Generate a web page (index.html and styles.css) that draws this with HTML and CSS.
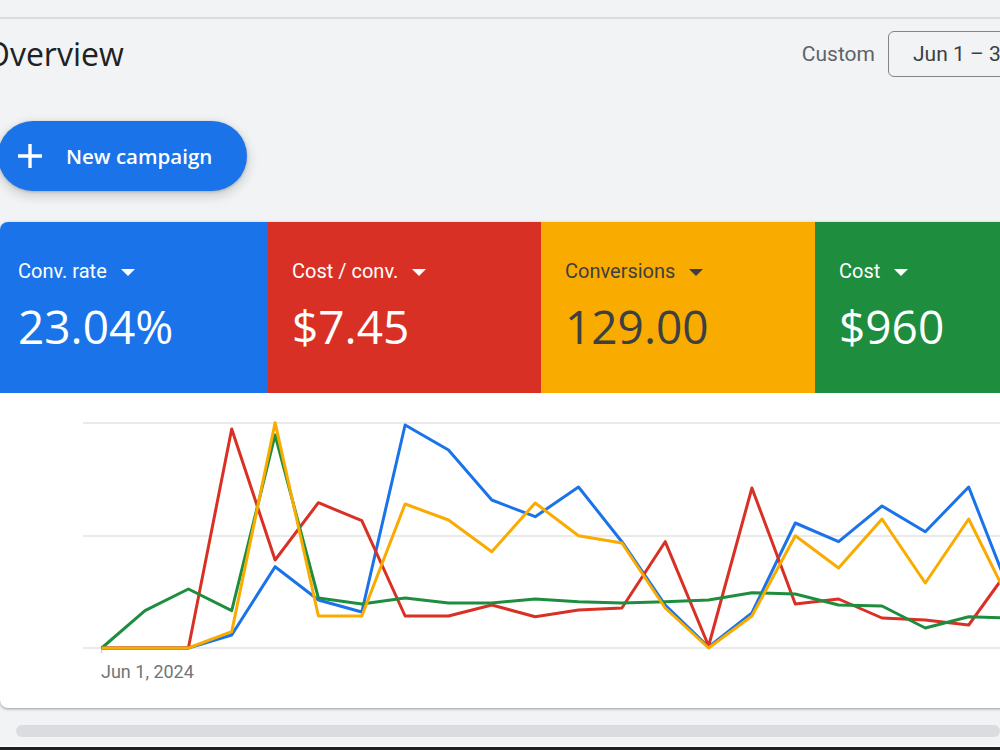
FILE: index.html
```html
<!DOCTYPE html>
<html>

<head>
    <title>Overview</title>
    <link rel="stylesheet" href="styles.css">
</head>

<body>
    <div class="topbar"></div>

    <main class="content">
        <header class="page-head">
            <h1>Overview</h1>
            <div class="range">
                <span class="range-label">Custom</span>
                <button class="range-box">Jun 1 – 30, 2024</button>
            </div>
        </header>

        <div class="actions">
            <button class="new-campaign">
                <svg class="plus" viewBox="0 0 24 24" width="24" height="24">
                    <path d="M12 0v24M0 12h24" />
                </svg>
                New campaign
            </button>
        </div>

        <section class="card">
            <div class="metrics">
                <div class="metric blue">
                    <div class="metric-label">Conv. rate <span class="caret"></span></div>
                    <div class="metric-value">23.04%</div>
                </div>
                <div class="metric red">
                    <div class="metric-label">Cost / conv. <span class="caret"></span></div>
                    <div class="metric-value">$7.45</div>
                </div>
                <div class="metric yellow">
                    <div class="metric-label">Conversions <span class="caret"></span></div>
                    <div class="metric-value">129.00</div>
                </div>
                <div class="metric green">
                    <div class="metric-label">Cost <span class="caret"></span></div>
                    <div class="metric-value">$960</div>
                </div>
            </div>

            <div class="chart">
                <svg width="1264" height="315" viewBox="0 0 1264 315">
                    <line class="grid" x1="83" y1="30" x2="1264" y2="30" />
                    <line class="grid" x1="83" y1="143" x2="1264" y2="143" />
                    <line class="grid" x1="83" y1="255" x2="1264" y2="255" />
                    <line class="tick" x1="101.7" y1="255" x2="101.7" y2="260" />

                    <polyline class="series s-blue" points="101.7,255 145,255 188.4,255 231.7,242 275.1,173.7 318.4,207 361.8,219 405.1,32 448.5,57 491.8,107 535.2,123.7 578.5,94 621.9,148.7 665.2,212 708.6,254 751.9,220 795.3,130 838.6,148.7 882,113 925.3,138.7 968.7,94 1012,205" />
                    <polyline class="series s-red" points="101.7,255 145,255 188.4,255 231.7,36 275.1,167 318.4,109.7 361.8,127.7 405.1,223 448.5,223 491.8,212 535.2,223.7 578.5,217 621.9,215 665.2,148.7 708.6,253 751.9,95 795.3,211 838.6,206 882,225 925.3,227 968.7,232 1012,172" />
                    <polyline class="series s-green" points="101.7,255 145,217.7 188.4,196 231.7,217.7 275.1,42 318.4,205 361.8,211 405.1,205 448.5,210 491.8,210 535.2,206 578.5,208.7 621.9,210 665.2,208.7 708.6,207 751.9,199.7 795.3,201 838.6,212 882,213 925.3,235 968.7,223.7 1012,225" />
                    <polyline class="series s-yellow" points="101.7,255 145,255 188.4,255 231.7,238.7 275.1,29.7 318.4,223 361.8,223 405.1,111 448.5,127 491.8,158.7 535.2,110 578.5,142.7 621.9,150 665.2,215 708.6,255 751.9,223 795.3,142.7 838.6,175 882,126 925.3,190 968.7,126 1012,213" />

                    <text class="axis-label" x="101" y="285">Jun 1, 2024</text>
                </svg>
            </div>
        </section>
    </main>

    <div class="hscroll">
        <div class="hscroll-thumb"></div>
    </div>
    <div class="taskbar"></div>
</body>

</html>
```

FILE: styles.css
```css
body {
    background: #f1f3f4;
    font-family: 'Roboto', 'Liberation Sans', sans-serif;
    margin: 0;
    padding: 0;
    overflow: hidden;
    height: 750px;
}

.topbar {
    height: 17px;
    border-bottom: 2px solid #dadce0;
}

/* page is scrolled a little to the right */
.content {
    width: 1300px;
    margin-left: -18px;
}

.page-head {
    display: flex;
    align-items: center;
    height: 70px;
    padding-right: 24px;
}

h1 {
    flex: 1;
    margin: 0 0 0 3px;
    font-family: 'Open Sans', sans-serif;
    font-weight: 400;
    font-size: 32px;
    line-height: 40px;
    color: #202124;
}

.range {
    display: flex;
    align-items: center;
    gap: 13px;
}

.range-label {
    font-size: 21px;
    color: #5f6368;
}

.range-box {
    width: 370px;
    height: 46px;
    padding: 0 24px;
    text-align: left;
    background: transparent;
    border: 1px solid #80868b;
    border-radius: 6px;
    font-family: 'Roboto', sans-serif;
    font-size: 21px;
    color: #3c4043;
}

.actions {
    padding: 32px 0 31px 16px;
}

.new-campaign {
    display: flex;
    align-items: center;
    gap: 24px;
    height: 70px;
    padding: 0 35px 0 20px;
    background-color: #1a73e8;
    color: #ffffff;
    border: none;
    border-radius: 35px;
    font-family: 'Open Sans', sans-serif;
    font-weight: 600;
    font-size: 20.5px;
    box-shadow: 0 1px 3px rgba(60, 64, 67, 0.3), 0 4px 8px 3px rgba(60, 64, 67, 0.15);
    cursor: pointer;
}

.plus path {
    stroke: #ffffff;
    stroke-width: 3.4;
    fill: none;
}

.card {
    margin-left: 18px;
    width: 1264px;
    background: #ffffff;
    border-radius: 8px;
    overflow: hidden;
    box-shadow: 0 1px 2px rgba(60, 64, 67, 0.3), 0 1px 3px 1px rgba(60, 64, 67, 0.15);
}

.metrics {
    display: grid;
    grid-template-columns: 268px 273px 274px 1fr;
    height: 171px;
}

.metric {
    padding: 37px 0 0 24px;
    color: #ffffff;
}

.metric.blue {
    background: #1a73e8;
    padding-left: 18px;
}

.metric.red {
    background: #d93025;
}

.metric.yellow {
    background: #f9ab00;
    color: #3c4043;
}

.metric.green {
    background: #1e8e3e;
}

.metric-label {
    display: flex;
    align-items: center;
    gap: 14px;
    font-size: 20px;
    line-height: 24px;
}

.caret {
    width: 0;
    height: 0;
    border-left: 7px solid transparent;
    border-right: 7px solid transparent;
    border-top: 7px solid currentColor;
    margin-top: 2px;
}

.metric-value {
    margin-top: 15px;
    font-family: 'Open Sans', sans-serif;
    font-size: 46px;
    line-height: 56px;
}

.chart {
    height: 315px;
}

.chart svg {
    display: block;
}

.grid {
    stroke: #e3e3e3;
    stroke-width: 1.5;
}

.tick {
    stroke: #bdc1c6;
    stroke-width: 1;
}

.series {
    fill: none;
    stroke-width: 3;
    stroke-linejoin: round;
}

.s-blue {
    stroke: #1a73e8;
}

.s-red {
    stroke: #d93025;
}

.s-yellow {
    stroke: #f9ab00;
}

.s-green {
    stroke: #1e8e3e;
}

.axis-label {
    font-family: 'Roboto', sans-serif;
    font-size: 18px;
    fill: #70757a;
}

.hscroll {
    height: 37px;
    margin-top: 2px;
    padding: 15px 0 0 16px;
    box-sizing: border-box;
    border-bottom: 2px solid #f8f9fa;
}

.hscroll-thumb {
    height: 12px;
    border-radius: 6px;
    background: #dadce0;
}

.taskbar {
    height: 3px;
    background: #202124;
}
```
